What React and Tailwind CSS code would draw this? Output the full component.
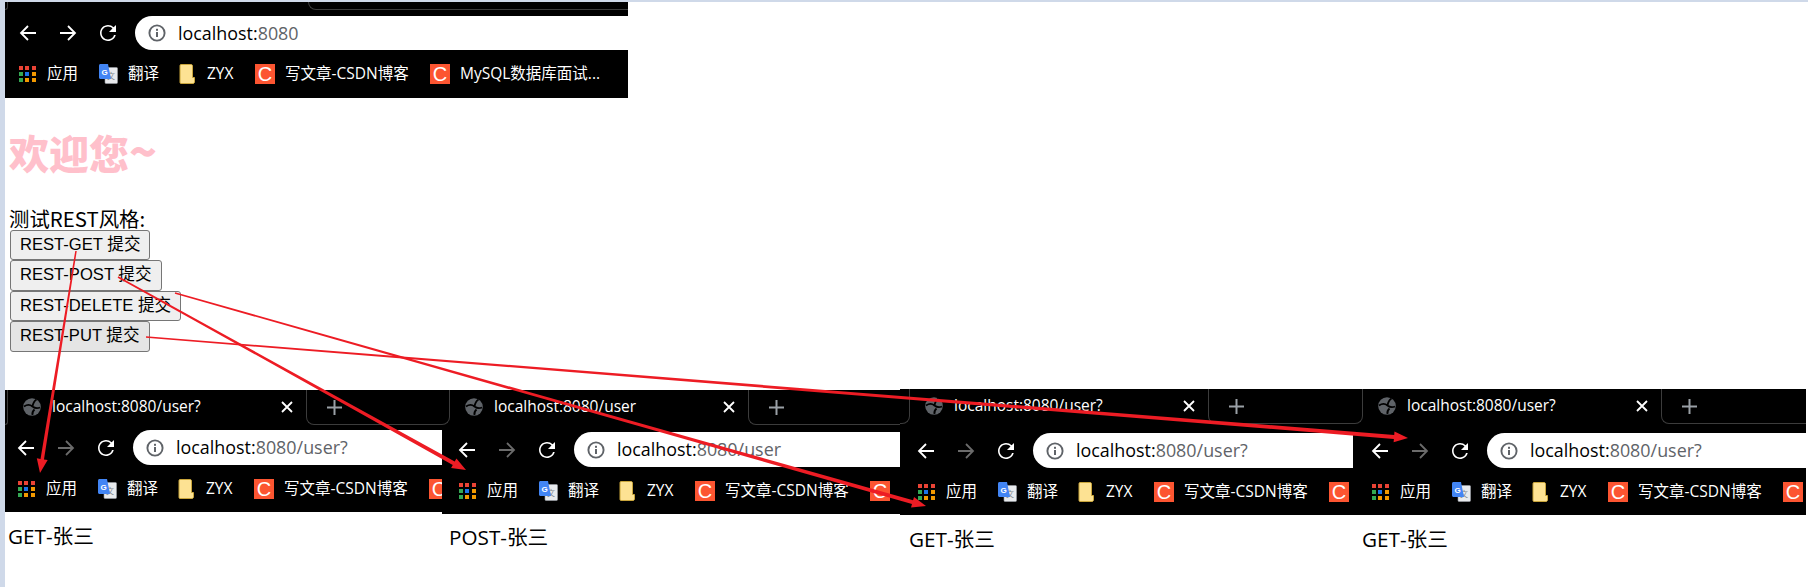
import React from 'react';

const UI_FONT = "font-['Open_Sans','Noto_Sans_CJK_SC',sans-serif]";

const panels = [
  { url: '8080/user?', tab: 'localhost:8080/user?', box: 'w-[437px] mt-[1px]', strip: 'h-[40px]', stub: 'w-[3px]', bar: 'pl-[12px]', marks: 'pl-[13px]', row: 'h-[47px]', label: 'GET-张三', caption: 'pl-[3px] mt-[10px]' },
  { url: '8080/user', tab: 'localhost:8080/user', box: 'w-[458px] mt-[1px]', strip: 'h-[42px]', stub: 'w-[8px]', bar: 'pl-[16px]', marks: 'pl-[17px]', row: 'h-[47px]', label: 'POST-张三', caption: 'pl-[7px] mt-[9px]' },
  { url: '8080/user?', tab: 'localhost:8080/user?', box: 'w-[453px]', strip: 'h-[44px]', stub: 'w-[10px]', bar: 'pl-[17px]', marks: 'pl-[18px]', row: 'h-[47px]', label: 'GET-张三', caption: 'pl-[9px] mt-[10px]' },
  { url: '8080/user?', tab: 'localhost:8080/user?', box: 'w-[453px]', strip: 'h-[44px]', stub: 'w-[10px]', bar: 'pl-[18px]', marks: 'pl-[19px]', row: 'h-[47px]', label: 'GET-张三', caption: 'pl-[9px] mt-[10px]' },
];

const buttons = [
  { label: 'REST-GET 提交', cls: 'h-[30px] bg-[#efefef]' },
  { label: 'REST-POST 提交', cls: 'h-[31px] bg-[#efefef]' },
  { label: 'REST-DELETE 提交', cls: 'h-[30px] bg-[#efefef]' },
  { label: 'REST-PUT 提交', cls: 'h-[31px] bg-[#e5e5e5]' },
];

const arrows = [
  { from: [76, 251], to: [40, 473], start: 1.5, end: 3.5 },
  { from: [118, 277], to: [466, 470], start: 1.5, end: 4 },
  { from: [175, 293], to: [926, 506], start: 1.5, end: 4 },
  { from: [146, 337], to: [1408, 438], start: 1.5, end: 4 },
];

function arrowPoints({ from, to, start, end }) {
  const dx = to[0] - from[0];
  const dy = to[1] - from[1];
  const len = Math.hypot(dx, dy);
  const ux = dx / len;
  const uy = dy / len;
  const nx = -uy;
  const ny = ux;
  const bx = to[0] - ux * 14;
  const by = to[1] - uy * 14;
  const pts = [
    [from[0] + nx * start / 2, from[1] + ny * start / 2],
    [bx + nx * end / 2, by + ny * end / 2],
    [bx + nx * 5.5, by + ny * 5.5],
    to,
    [bx - nx * 5.5, by - ny * 5.5],
    [bx - nx * end / 2, by - ny * end / 2],
    [from[0] - nx * start / 2, from[1] - ny * start / 2],
  ];
  return pts.map(p => p.join(',')).join(' ');
}

function BackIcon({ color = 'white', flip = false }) {
  return (
    <svg width="18" height="18" viewBox="0 0 18 18" fill="none" stroke={color} strokeWidth="1.8" className={flip ? 'rotate-180' : ''}>
      <path d="M17 9H2M9 2L2 9l7 7" />
    </svg>
  );
}

function ReloadIcon() {
  return (
    <svg width="18" height="18" viewBox="3 3 18 18" fill="white">
      <path d="M17.65 6.35A7.958 7.958 0 0 0 12 4c-4.42 0-7.99 3.58-7.99 8s3.57 8 7.99 8c3.73 0 6.84-2.55 7.73-6h-1.7A6.4 6.4 0 0 1 12 18.4c-3.53 0-6.4-2.87-6.4-6.4s2.87-6.4 6.4-6.4c1.77 0 3.3.74 4.45 1.9L13 11h7V4l-2.35 2.35z" />
    </svg>
  );
}

function InfoIcon() {
  return (
    <svg width="18" height="18" viewBox="0 0 18 18" className="shrink-0">
      <circle cx="9" cy="9" r="7.6" fill="none" stroke="#5f6368" strokeWidth="1.9" />
      <rect x="8" y="8" width="2" height="5" fill="#5f6368" />
      <rect x="8" y="4.8" width="2" height="2" fill="#5f6368" />
    </svg>
  );
}

function GlobeIcon() {
  return (
    <svg width="18" height="18" viewBox="0 0 18 18" className="shrink-0">
      <circle cx="9" cy="9" r="8.8" fill="#5f6368" />
      <path d="M1 8.5C4 6.5 7 6.5 9.5 8.5S13.5 11 17 9.5M13.5 1.5C11 3 10 5.5 9.5 8.5M9.5 17c-.5-2 .3-4 2-5.5" fill="none" stroke="black" strokeWidth="1.8" />
    </svg>
  );
}

function AppsIcon() {
  const colors = ['#ea4335', '#ea4335', '#ea4335', '#34a853', '#1a73e8', '#f29900', '#34a853', '#f29900', '#f29900'];
  return (
    <div className="grid grid-cols-3 gap-[2px] w-[17px] shrink-0">
      {colors.map((c, i) => (
        <svg key={i} width="4" height="4"><rect width="4" height="4" fill={c} /></svg>
      ))}
    </div>
  );
}

function TranslateIcon() {
  return (
    <svg width="20" height="20" viewBox="0 0 20 20" className="shrink-0">
      <rect x="7" y="3.5" width="12.5" height="16" rx="1" fill="#e8eaed" stroke="#9aa0a6" strokeWidth="0.6" />
      <text x="13" y="15" fontSize="8" fill="#80868b" textAnchor="middle" fontFamily="Noto Sans CJK SC, sans-serif">文</text>
      <path d="M1 1.5C1 .7 1.7 0 2.5 0H10l3 15H2.5C1.7 15 1 14.3 1 13.5z" fill="#4285f4" />
      <text x="6.5" y="10.5" fontSize="8" fontWeight="700" fill="white" textAnchor="middle" fontFamily="Liberation Sans, sans-serif">G</text>
    </svg>
  );
}

function FolderIcon() {
  return (
    <svg width="16" height="20" viewBox="0 0 16 20" className="shrink-0">
      <path d="M1 1.5C1 1 1.5.5 2 .5h10c1 0 1.5.5 1.5 1.5v11.5h2V18c0 .8-.6 1.5-1.5 1.5H2c-.5 0-1-.5-1-1z" fill="#fde293" stroke="#c9a53b" strokeWidth="1" />
    </svg>
  );
}

function CsdnIcon() {
  return (
    <div className="w-[20px] h-[20px] shrink-0 bg-[#fc5531] text-white flex items-center justify-center text-[20px] leading-none font-['Liberation_Sans',sans-serif]">
      C
    </div>
  );
}

function Bookmark({ icon, text, cls }) {
  return (
    <div className={`flex items-center shrink-0 ${cls}`}>
      {icon}
      {text && <span className="whitespace-nowrap">{text}</span>}
    </div>
  );
}

function Bookmarks({ pad, row, lastText }) {
  return (
    <div className={`flex items-center overflow-hidden text-white text-[15.5px] ${UI_FONT} ${pad} ${row}`}>
      <Bookmark icon={<AppsIcon />} text="应用" cls="w-[79px] gap-[11px]" />
      <Bookmark icon={<TranslateIcon />} text="翻译" cls="w-[81px] gap-[10px]" />
      <Bookmark icon={<FolderIcon />} text="ZYX" cls="w-[76px] gap-[12px]" />
      <Bookmark icon={<CsdnIcon />} text="写文章-CSDN博客" cls="w-[175px] gap-[10px]" />
      <Bookmark icon={<CsdnIcon />} text={lastText} cls="gap-[10px]" />
    </div>
  );
}

function Toolbar({ pad, path, forward = '#6b6b6b', pillH = 'h-[35px]' }) {
  return (
    <div className={`flex items-center ${pad}`}>
      <div className="flex items-center gap-[22px] mr-[18px]">
        <BackIcon />
        <BackIcon color={forward} flip />
        <ReloadIcon />
      </div>
      <div className={`flex-1 min-w-0 bg-white rounded-l-full flex items-center gap-[12px] pl-[13px] text-[17.9px] ${UI_FONT} ${pillH}`}>
        <InfoIcon />
        <span className="whitespace-nowrap">
          <span className="text-black">localhost:</span>
          <span className="text-[#5f6368]">{path}</span>
        </span>
      </div>
    </div>
  );
}

function TabStrip({ stub, strip, title }) {
  return (
    <div className={`flex items-start ${strip}`}>
      <div className={`h-[35px] shrink-0 border-r border-b border-[#3c3c3c] rounded-br-[8px] ${stub}`}></div>
      <div className="w-[298px] h-[34px] shrink-0 flex items-center gap-[11px] pl-[15px] pr-[13px] text-white text-[15.5px] whitespace-nowrap">
        <GlobeIcon />
        <span className={`flex-1 ${UI_FONT}`}>{title}</span>
        <svg width="12" height="12" viewBox="0 0 12 12" stroke="white" strokeWidth="1.8"><path d="M1 1l10 10M11 1L1 11" /></svg>
      </div>
      <div className="flex-1 h-[35px] border-l border-b border-[#3c3c3c] rounded-bl-[8px] flex items-center pl-[20px]">
        <svg width="15" height="15" viewBox="0 0 15 15" stroke="#9aa0a6" strokeWidth="2"><path d="M7.5 0v15M0 7.5h15" /></svg>
      </div>
    </div>
  );
}

function Panel({ p }) {
  return (
    <div className={`shrink-0 ${p.box}`}>
      <div className="bg-black">
        <TabStrip stub={p.stub} strip={p.strip} title={p.tab} />
        <Toolbar pad={p.bar} path={p.url} />
        <Bookmarks pad={p.marks} row={p.row} />
      </div>
      <div className={`text-[20.7px] leading-[28px] text-black ${UI_FONT} ${p.caption}`}>{p.label}</div>
    </div>
  );
}

export default function App() {
  return (
    <div className="relative w-[1808px] h-[587px] overflow-hidden bg-white flex">
      <div className="w-[5px] shrink-0 bg-[#cfd9e9]"></div>
      <div className="flex-1 flex flex-col min-w-0">
        <div className="h-[2px] bg-[#cfd9e9] shrink-0"></div>

        {/* top browser window */}
        <div className="w-[623px] h-[96px] bg-black shrink-0 overflow-hidden">
          <div className="flex h-[14px] items-start">
            <div className="w-[3px] h-[8px] border-r border-b border-[#3c3c3c] rounded-br-[8px]"></div>
            <div className="w-[300px]"></div>
            <div className="flex-1 h-[8px] border-l border-b border-[#3c3c3c] rounded-bl-[8px]"></div>
          </div>
          <Toolbar pad="pl-[14px]" path="8080" forward="white" pillH="h-[34px]" />
          <Bookmarks pad="pl-[14px]" row="h-[48px]" lastText="MySQL数据库面试..." />
        </div>

        {/* page content */}
        <div className="h-[291px] shrink-0 pl-[4px] font-['Noto_Sans_CJK_SC',sans-serif]">
          <h1 className="mt-[27px] h-[48px] leading-[48px] text-[40px] font-black text-[#ffc0cb] whitespace-nowrap">
            欢迎您<span className="text-[46px]">~</span>
          </h1>
          <div className="mt-[31px] h-[26px] leading-[28px] text-[20.4px] text-black">测试REST风格:</div>
          <div className="flex flex-col items-start pl-[1px]">
            {buttons.map(b => (
              <button key={b.label} className={`px-[9px] border border-[#767676] rounded-[3px] text-[16.6px] text-black whitespace-nowrap font-['Liberation_Sans','Noto_Sans_CJK_SC',sans-serif] ${b.cls}`}>
                {b.label}
              </button>
            ))}
          </div>
        </div>

        {/* result windows */}
        <div className="flex items-start">
          {panels.map((p, i) => (
            <Panel key={i} p={p} />
          ))}
        </div>
      </div>

      {/* annotation arrows drawn over the screenshot */}
      <svg className="absolute left-0 top-0 pointer-events-none" width="1808" height="587">
        {arrows.map((a, i) => (
          <polygon key={i} points={arrowPoints(a)} fill="#ed1c24" />
        ))}
      </svg>
    </div>
  );
}
